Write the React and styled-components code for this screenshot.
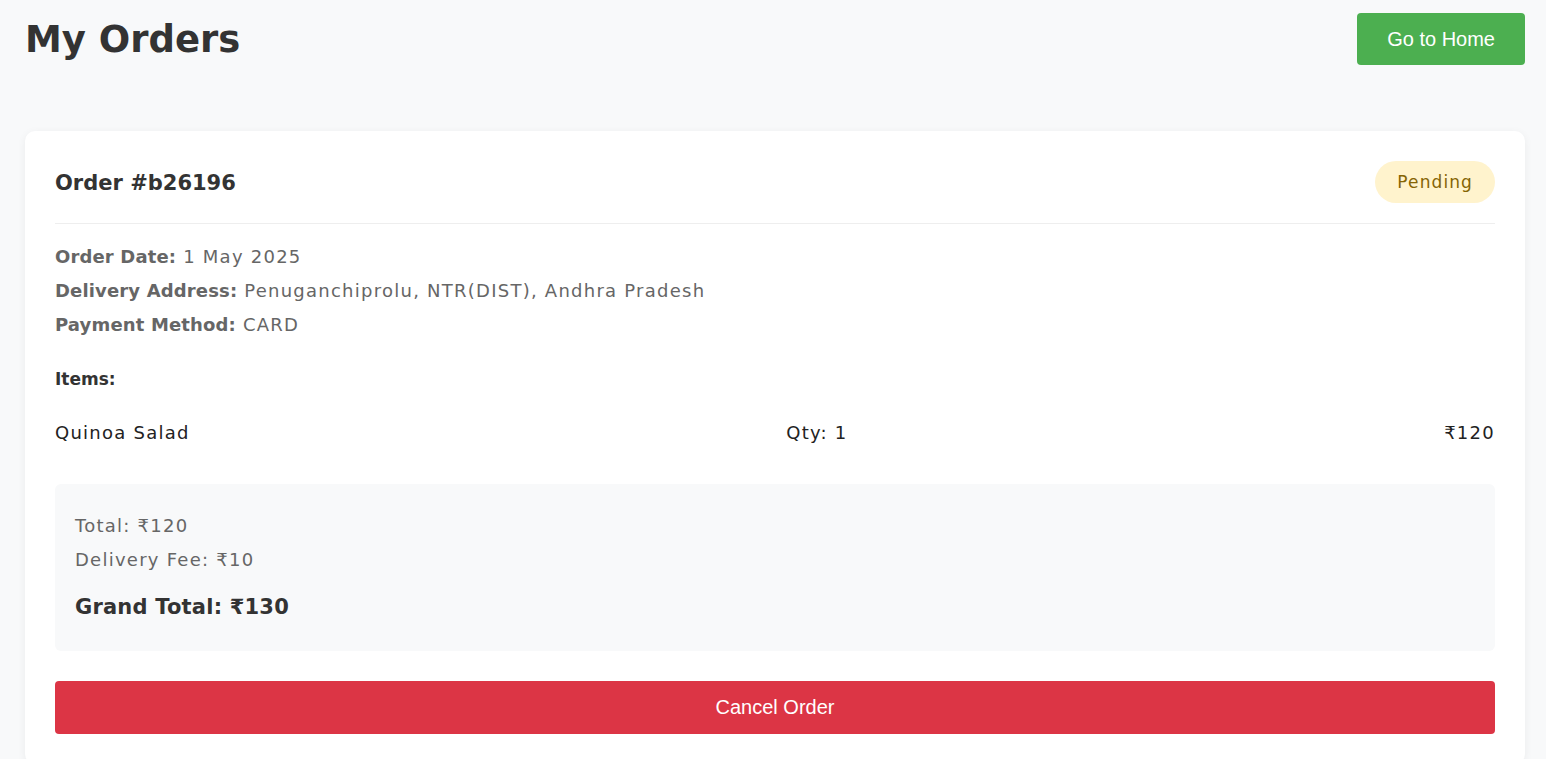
import React from "react";
import styled, { createGlobalStyle } from "styled-components";

const GlobalStyle = createGlobalStyle`
  body {
    margin: 0;
    background: #f8f9fa;
    font-family: "DejaVu Sans", "Noto Sans", sans-serif;
    color: #333;
  }
`;

const Page = styled.div`
  padding: 13px 21px 20px 25px;
`;

const TopBar = styled.div`
  display: flex;
  justify-content: space-between;
  align-items: flex-start;
  margin-bottom: 66px;
`;

const Title = styled.h1`
  margin: 5px 0 0;
  font-size: 37px;
  font-weight: 700;
  color: #333;
`;

const Button = styled.button`
  border: none;
  border-radius: 4px;
  color: white;
  font-family: "Liberation Sans", Arial, sans-serif;
  font-size: 20px;
  cursor: pointer;
  background: ${(p) => (p.danger ? "#dc3545" : "#4caf50")};
  padding: ${(p) => (p.danger ? "14px 0" : "14px 30px")};
  width: ${(p) => (p.danger ? "100%" : "auto")};
  line-height: ${(p) => (p.danger ? "25px" : "24px")};
`;

const Card = styled.div`
  background: white;
  border-radius: 10px;
  box-shadow: 0 2px 8px rgba(0, 0, 0, 0.06);
  padding: 30px;
`;

const CardHeader = styled.div`
  display: flex;
  justify-content: space-between;
  align-items: center;
  padding-bottom: 20px;
  border-bottom: 1px solid #eee;
  margin-bottom: 16px;
`;

const OrderId = styled.h3`
  margin: 0;
  font-size: 21px;
  font-weight: 700;
  color: #333;
  padding-top: 2px;
`;

const Badge = styled.span`
  background: #fff3cd;
  color: #856404;
  border-radius: 21px;
  padding: 0 22px;
  height: 42px;
  display: inline-flex;
  align-items: center;
  font-size: 17px;
  letter-spacing: 1.1px;
`;

const InfoLine = styled.p`
  margin: 0;
  line-height: 34px;
  font-size: 18px;
  color: #666;
  letter-spacing: 1.25px;
  strong {
    color: #666;
    letter-spacing: 0.15px;
  }
`;

const ItemsTitle = styled.h4`
  margin: 20px 0 0;
  font-size: 17px;
  line-height: 34px;
  color: #333;
`;

const ItemRow = styled.div`
  display: flex;
  justify-content: space-between;
  font-size: 18px;
  color: #222;
  letter-spacing: 1.25px;
  line-height: 24px;
  padding: 10px 0;
  margin: 15px 0 29px;
`;

const Summary = styled.div`
  background: #f8f9fa;
  border-radius: 6px;
  padding: 25px 20px 24px;
  margin-bottom: 30px;
`;

const SummaryLine = styled.p`
  margin: 0;
  font-size: 18px;
  line-height: 34px;
  letter-spacing: 1.25px;
  color: #666;
`;

const GrandTotal = styled.p`
  margin: 10px 0 0;
  font-size: 21px;
  line-height: 40px;
  font-weight: 700;
  letter-spacing: 0.2px;
  color: #333;
`;

const App = () => {
  return (
    <Page>
      <GlobalStyle />
      <TopBar>
        <Title>My Orders</Title>
        <Button>Go to Home</Button>
      </TopBar>
      <Card>
        <CardHeader>
          <OrderId>Order #b26196</OrderId>
          <Badge>Pending</Badge>
        </CardHeader>
        <InfoLine>
          <strong>Order Date:</strong> 1 May 2025
        </InfoLine>
        <InfoLine>
          <strong>Delivery Address:</strong> Penuganchiprolu, NTR(DIST), Andhra Pradesh
        </InfoLine>
        <InfoLine>
          <strong>Payment Method:</strong> CARD
        </InfoLine>
        <ItemsTitle>Items:</ItemsTitle>
        <ItemRow>
          <span>Quinoa Salad</span>
          <span>Qty: 1</span>
          <span>₹120</span>
        </ItemRow>
        <Summary>
          <SummaryLine>Total: ₹120</SummaryLine>
          <SummaryLine>Delivery Fee: ₹10</SummaryLine>
          <GrandTotal>Grand Total: ₹130</GrandTotal>
        </Summary>
        <Button danger>Cancel Order</Button>
      </Card>
    </Page>
  );
};

export default App;
